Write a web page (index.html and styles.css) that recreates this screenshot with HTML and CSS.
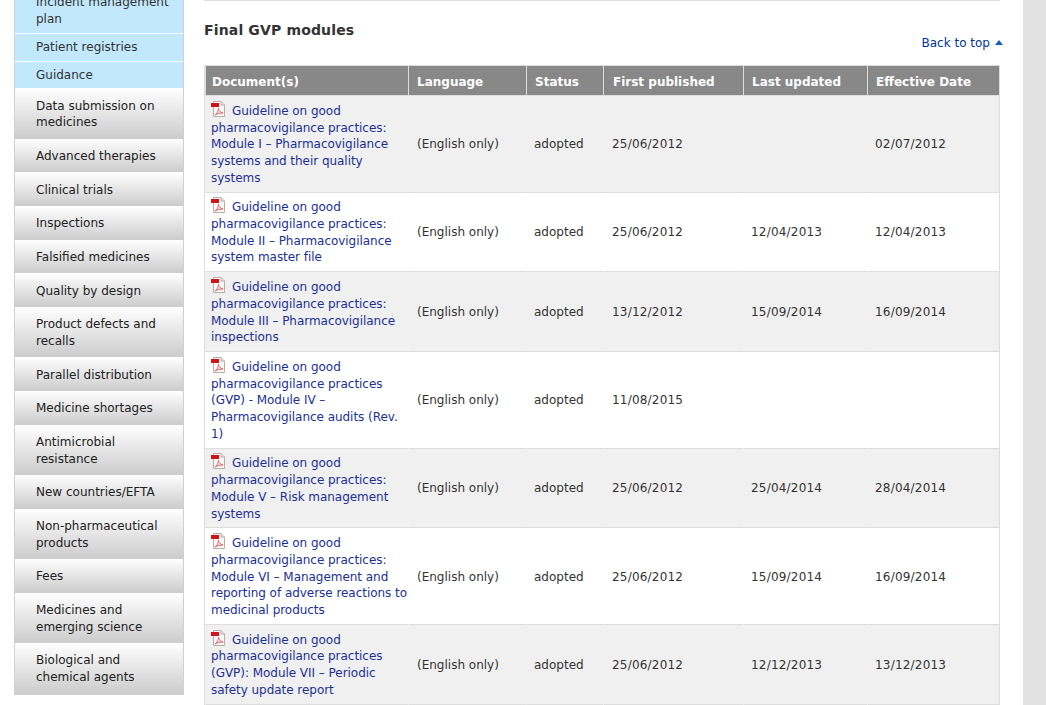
FILE: index.html
```html
<!DOCTYPE html>
<html lang="en">
<head>
<meta charset="utf-8">
<title>Good pharmacovigilance practices</title>
<link rel="stylesheet" href="styles.css">
</head>
<body>
<svg class="defs" width="0" height="0" aria-hidden="true">
  <symbol id="pdf" viewBox="0 0 14 16">
    <path d="M2.5 .5H10L13.5 4V15.500H2.500Z" fill="#fbf8f6" stroke="#b9aeaa"/>
    <path d="M10 .5V4H13.5" fill="#e8e2df" stroke="#b9aeaa"/>
    <rect x="0" y="2" width="8" height="4" fill="#d3131b"/>
    <path d="M4 14C6 12.500 7.500 10 7.500 7.500C8 10 9.500 11.500 12 12C9.500 11.800 6.500 12.500 4 14Z" fill="none" stroke="#e0606a" stroke-width="1"/>
  </symbol>
</svg>
<div class="page">
  <nav class="side">
    <a class="sub">Incident management plan</a>
    <a class="sub">Patient registries</a>
    <a class="sub">Guidance</a>
    <a class="item">Data submission on medicines</a>
    <a class="item">Advanced therapies</a>
    <a class="item">Clinical trials</a>
    <a class="item">Inspections</a>
    <a class="item">Falsified medicines</a>
    <a class="item">Quality by design</a>
    <a class="item">Product defects and recalls</a>
    <a class="item">Parallel distribution</a>
    <a class="item">Medicine shortages</a>
    <a class="item">Antimicrobial resistance</a>
    <a class="item">New countries/EFTA</a>
    <a class="item">Non-pharmaceutical products</a>
    <a class="item">Fees</a>
    <a class="item">Medicines and emerging science</a>
    <a class="item">Biological and chemical agents</a>
  </nav>
  <main class="main">
    <h2 class="title">Final GVP modules</h2>
    <div class="back"><a>Back to top</a><span class="tri"></span></div>
    <table class="docs">
      <colgroup>
        <col class="c1"><col class="c2"><col class="c3"><col class="c4"><col class="c5"><col class="c6">
      </colgroup>
      <thead>
        <tr><th>Document(s)</th><th>Language</th><th>Status</th><th>First published</th><th>Last updated</th><th>Effective Date</th></tr>
      </thead>
      <tbody>
        <tr><td class="doc"><svg class="pdf"><use href="#pdf"/></svg><a>Guideline on good pharmacovigilance practices: Module I – Pharmacovigilance systems and their quality systems</a></td><td>(English only)</td><td>adopted</td><td class="date">25/06/2012</td><td class="date"></td><td class="date">02/07/2012</td></tr>
        <tr><td class="doc"><svg class="pdf"><use href="#pdf"/></svg><a>Guideline on good pharmacovigilance practices: Module II – Pharmacovigilance system master file</a></td><td>(English only)</td><td>adopted</td><td class="date">25/06/2012</td><td class="date">12/04/2013</td><td class="date">12/04/2013</td></tr>
        <tr><td class="doc"><svg class="pdf"><use href="#pdf"/></svg><a>Guideline on good pharmacovigilance practices: Module III – Pharmacovigilance inspections</a></td><td>(English only)</td><td>adopted</td><td class="date">13/12/2012</td><td class="date">15/09/2014</td><td class="date">16/09/2014</td></tr>
        <tr><td class="doc"><svg class="pdf"><use href="#pdf"/></svg><a>Guideline on good pharmacovigilance practices (GVP) - Module IV – Pharmacovigilance audits (Rev. 1)</a></td><td>(English only)</td><td>adopted</td><td class="date">11/08/2015</td><td class="date"></td><td class="date"></td></tr>
        <tr><td class="doc"><svg class="pdf"><use href="#pdf"/></svg><a>Guideline on good pharmacovigilance practices: Module V – Risk management systems</a></td><td>(English only)</td><td>adopted</td><td class="date">25/06/2012</td><td class="date">25/04/2014</td><td class="date">28/04/2014</td></tr>
        <tr><td class="doc"><svg class="pdf"><use href="#pdf"/></svg><a>Guideline on good pharmacovigilance practices: Module VI – Management and reporting of adverse reactions to medicinal products</a></td><td>(English only)</td><td>adopted</td><td class="date">25/06/2012</td><td class="date">15/09/2014</td><td class="date">16/09/2014</td></tr>
        <tr><td class="doc"><svg class="pdf"><use href="#pdf"/></svg><a>Guideline on good pharmacovigilance practices (GVP): Module VII – Periodic safety update report</a></td><td>(English only)</td><td>adopted</td><td class="date">25/06/2012</td><td class="date">12/12/2013</td><td class="date">13/12/2013</td></tr>
      </tbody>
    </table>
  </main>
</div>
</body>
</html>
```
FILE: styles.css
```css
html, body { margin: 0; padding: 0; height: 705px; overflow: hidden; background: #e2e2e2; }
body { font-family: "DejaVu Sans", Verdana, sans-serif; font-size: 12px; line-height: 16.8px; color: #333; }
.defs { display: block; height: 0; }
.page { width: 1023px; height: 705px; background: #fff; display: flex; gap: 20px; padding-left: 14px; box-sizing: border-box; overflow: hidden; align-items: flex-start; }
.side { width: 170px; flex: none; margin-top: -11px; display: flex; flex-direction: column; border: solid #d0d0d0; border-width: 0 1px 1px; box-sizing: border-box; }
.side a { display: block; }
.sub { background: #c1e8fc; color: #333; padding: 5.2px 5px 5.2px 21px; border-bottom: 1px solid #fff; }
.sub:nth-child(3) { border-bottom: 0; padding-bottom: 4.2px; }
.item { color: #222; padding: 9.2px 20px 7.66px 21px; background: linear-gradient(#fff, #ccc); }
.main { width: 796px; flex: none; border-top: 1px solid #ddd; }
.title { margin: 21px 0 0; font-size: 14px; line-height: 16px; font-weight: bold; color: #333; letter-spacing: 0.15px; }
.back { display: flex; justify-content: flex-end; align-items: center; gap: 5px; margin: -3px -3px 0 0; height: 17px; }
.back a { color: #003399; }
.tri { width: 0; height: 0; border-style: solid; border-color: transparent; border-width: 0 4.5px 5px; border-bottom-color: #1560c0; margin-bottom: 3px; }
.docs { margin-top: 13px; width: 796px; table-layout: fixed; border-collapse: separate; border-spacing: 0; border: 1px solid #ddd; border-bottom: 0; }
.c1 { width: 203px; } .c2 { width: 118px; } .c3 { width: 77px; } .c4 { width: 140px; } .c5 { width: 124px; } .c6 { width: 132px; }
th { background: #888; color: #fff; font-weight: bold; text-align: left; padding: 8px 7px 4px 8px; height: 17px; border-left: 1px solid #ddd; border-bottom: 1px solid #ddd; }
th:first-child { padding-left: 6px; }
th:nth-child(4) { padding-left: 9px; }
td { padding: 6.8px 7px 5.2px 8px; line-height: 16.7px; border-left: 1px solid transparent; border-bottom: 1px solid #ddd; vertical-align: middle; }
td:nth-child(3) { padding-left: 7px; }
td.doc { padding-left: 5px; padding-right: 0; letter-spacing: -0.04px; }
td.date { letter-spacing: 0.2px; padding-left: 8px; }
td.date + td.date { padding-left: 7px; }
tbody tr:nth-child(odd) td { background: #f0f0f0; }
td a { color: #1b2f94; }
.pdf { width: 14px; height: 16px; margin: -4px 7px -1px 0; vertical-align: -1px; }
```
